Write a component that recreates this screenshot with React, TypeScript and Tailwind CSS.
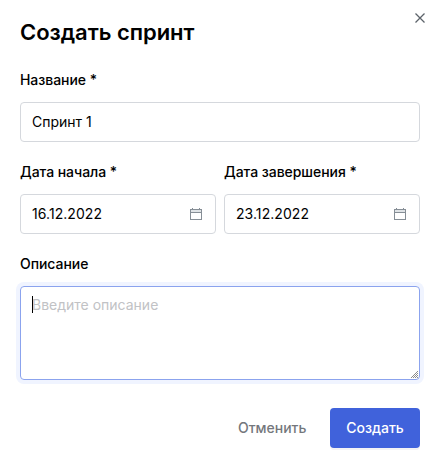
function CalendarIcon() {
  return (
    <svg width="16" height="16" viewBox="0 0 16 16" shapeRendering="crispEdges">
      <path d="M2 3h12v11H2z" fill="#868e96" />
      <path d="M3 4h10v2H3z" fill="#dfe3e6" />
      <path d="M3 7h10v6H3z" fill="#fff" />
      <path d="M4 2h1v1H4zM11 2h1v1h-1z" fill="#868e96" />
    </svg>
  );
}

// Alternating pixels that fill the lower right triangle of the resize grip.
const gripRows = [0, 1, 2, 3, 4, 5, 6];

function ResizeGrip() {
  return (
    <svg className="absolute right-0 bottom-0" width="8" height="8" viewBox="0 0 8 8" shapeRendering="crispEdges">
      {gripRows.map((row) =>
        gripRows
          .filter((col) => row + col >= 6 && (row + col) % 2 === 0)
          .map((col) => <rect key={`${row}-${col}`} x={col} y={row} width="1" height="1" fill="#8c8c8c" />),
      )}
    </svg>
  );
}

function Label({ children }: { children: string }) {
  return <label className="block h-5 text-sm leading-5 font-medium tracking-[-0.05px] text-black">{children}</label>;
}

function DateField({ label, value }: { label: string; value: string }) {
  return (
    <div className="flex w-[196px] flex-col gap-3">
      <Label>{label}</Label>
      <div className="flex h-10 items-center justify-between rounded-[4px] border border-[#d5d8dd] px-[11px] text-sm text-black">
        <span className="tracking-[0.06px]">{value}</span>
        <CalendarIcon />
      </div>
    </div>
  );
}

export default function App() {
  return (
    <div className="relative flex h-[464px] w-[445px] flex-col bg-white pt-[18px] pl-5 font-['Inter',sans-serif]">
      <svg className="absolute top-[13px] left-[415px]" width="10" height="10" viewBox="0 0 10 10" fill="none" stroke="#5c636a" strokeWidth="1.3">
        <path d="M0.5 0.5l9 9M9.5 0.5l-9 9" />
      </svg>
      <h1 className="h-7 text-[22px] leading-7 font-semibold tracking-[-0.04px] text-black">Создать спринт</h1>
      <div className="mt-6 flex w-[400px] flex-col gap-3">
        <Label>Название *</Label>
        <div className="flex h-10 items-center rounded-[4px] border border-[#d5d8dd] px-[11px] text-sm text-black">Спринт 1</div>
      </div>
      <div className="mt-5 flex gap-2">
        <DateField label="Дата начала *" value="16.12.2022" />
        <DateField label="Дата завершения *" value="23.12.2022" />
      </div>
      <div className="mt-5 flex w-[400px] flex-col gap-3">
        <Label>Описание</Label>
        <div className="relative h-[94px] rounded-[4px] border border-[#8ba3ee] px-[11px] pt-2 text-sm leading-5 text-[#c1c2c5] shadow-[0_0_0_4px_#f0f4ff]">
          Введите описание
          <span className="absolute top-[9px] left-[11px] h-[17px] w-px bg-black" />
          <ResizeGrip />
        </div>
      </div>
      <div className="mt-7 flex h-10 w-[400px] items-center justify-end text-sm font-medium">
        <button className="mr-[23.5px] text-[#74777c]">Отменить</button>
        <button className="h-10 w-[90px] rounded-[4px] bg-[#4062db] text-white shadow-[0_2px_0_#f3f3f5]">Создать</button>
      </div>
    </div>
  );
}
